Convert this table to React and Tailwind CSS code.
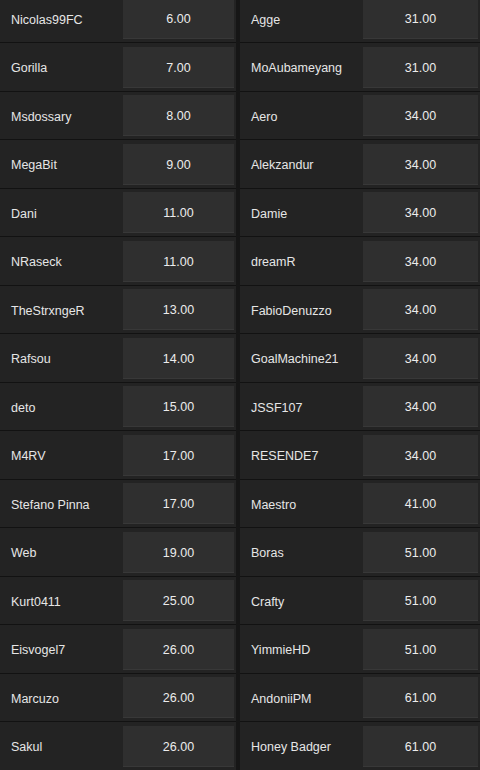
const left = [
  ['Nicolas99FC', '6.00'],
  ['Gorilla', '7.00'],
  ['Msdossary', '8.00'],
  ['MegaBit', '9.00'],
  ['Dani', '11.00'],
  ['NRaseck', '11.00'],
  ['TheStrxngeR', '13.00'],
  ['Rafsou', '14.00'],
  ['deto', '15.00'],
  ['M4RV', '17.00'],
  ['Stefano Pinna', '17.00'],
  ['Web', '19.00'],
  ['Kurt0411', '25.00'],
  ['Eisvogel7', '26.00'],
  ['Marcuzo', '26.00'],
  ['Sakul', '26.00'],
];

const right = [
  ['Agge', '31.00'],
  ['MoAubameyang', '31.00'],
  ['Aero', '34.00'],
  ['Alekzandur', '34.00'],
  ['Damie', '34.00'],
  ['dreamR', '34.00'],
  ['FabioDenuzzo', '34.00'],
  ['GoalMachine21', '34.00'],
  ['JSSF107', '34.00'],
  ['RESENDE7', '34.00'],
  ['Maestro', '41.00'],
  ['Boras', '51.00'],
  ['Crafty', '51.00'],
  ['YimmieHD', '51.00'],
  ['AndoniiPM', '61.00'],
  ['Honey Badger', '61.00'],
];

const Row = ({ name, value }) => (
  <div className="h-[48.5px] flex flex-col">
    <div className="flex h-[41px]">
      <div className="w-[123px] pl-[11px] pt-[3px] flex items-center text-[#e6e6e6]">{name}</div>
      <div className="flex-1 mr-[2px] pt-[3px] bg-[#2f2f2f] border-b border-[#383838] flex items-center justify-center text-[#ececec]">
        {value}
      </div>
    </div>
    <div className="h-[3px]" />
    <div className="h-px bg-[#121212]" />
  </div>
);

const Column = ({ rows, className }) => (
  <div className={`bg-[#232323] ${className}`}>
    {rows.map(([name, value]) => (
      <Row key={name} name={name} value={value} />
    ))}
  </div>
);

export default function App() {
  return (
    <div
      className="w-[480px] h-[770px] overflow-hidden bg-[#161616] text-[12.5px]"
      style={{ fontFamily: '"Liberation Sans", Arial, sans-serif' }}
    >
      <div className="flex gap-[4px] -mt-[2px]">
        <Column rows={left} className="w-[236px]" />
        <Column rows={right} className="flex-1" />
      </div>
    </div>
  );
}
